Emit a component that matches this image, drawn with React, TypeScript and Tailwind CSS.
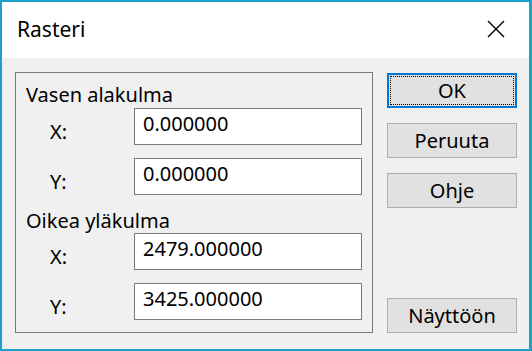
import React from 'react';

const font = { fontFamily: '"Noto Sans", "Open Sans", sans-serif' };

const Field: React.FC<{ label: string; value: string; className?: string }> = ({ label, value, className }) => (
  <div className={`flex items-start pl-[34px] ${className ?? ''}`}>
    <span className="w-[84px] mt-[11px] leading-[25px]">{label}</span>
    <div className="w-[228px] h-[37px] bg-white border border-[#7a7a7a] pl-[8px] pt-[2px] leading-[25px]">{value}</div>
  </div>
);

const Btn: React.FC<{ children: React.ReactNode; primary?: boolean; className?: string }> = ({ children, primary, className }) => (
  <button
    className={`relative w-[130px] h-[35px] bg-[#e1e1e1] leading-[25px] ${
      primary ? 'border-2 border-[#0078d7]' : 'border border-[#adadad]'
    } ${className ?? ''}`}
  >
    {primary && <span className="absolute inset-[1px] border border-dotted border-black" />}
    {children}
  </button>
);

export default function App() {
  return (
    <div
      className="w-[532px] h-[351px] flex flex-col border-t-2 border-l-2 border-b-2 border-r-[3px] border-[#19a1c7] bg-[#f0f0f0] text-black text-[20px]"
      style={font}
    >
      <div className="h-[56px] bg-white flex items-center justify-between pl-[15px] pr-[24px]">
        <span className="text-[21px]">Rasteri</span>
        <svg width="18" height="18" viewBox="0 0 18 18" className="mt-[-3px]">
          <path d="M1 1 L17 17 M17 1 L1 17" stroke="#000" strokeWidth="1.4" fill="none" />
        </svg>
      </div>
      <div className="flex flex-1 pl-[13px] pt-[14px]">
        <div className="w-[358px] h-[261px] border border-[#7a7a7a] pt-[9px] pb-[11px]">
          <div className="pl-[10px] leading-[25px]">Vasen alakulma</div>
          <Field label="X:" value="0.000000" className="mt-[1px]" />
          <Field label="Y:" value="0.000000" className="mt-[13px]" />
          <div className="pl-[10px] leading-[25px] mt-[13px]">Oikea yläkulma</div>
          <Field label="X:" value="2479.000000" />
          <Field label="Y:" value="3425.000000" className="mt-[13px]" />
        </div>
        <div className="ml-[14px] mt-[1px] flex flex-col gap-[15px]">
          <Btn primary>OK</Btn>
          <Btn>Peruuta</Btn>
          <Btn>Ohje</Btn>
          <Btn className="mt-[75px]">Näyttöön</Btn>
        </div>
      </div>
    </div>
  );
}
